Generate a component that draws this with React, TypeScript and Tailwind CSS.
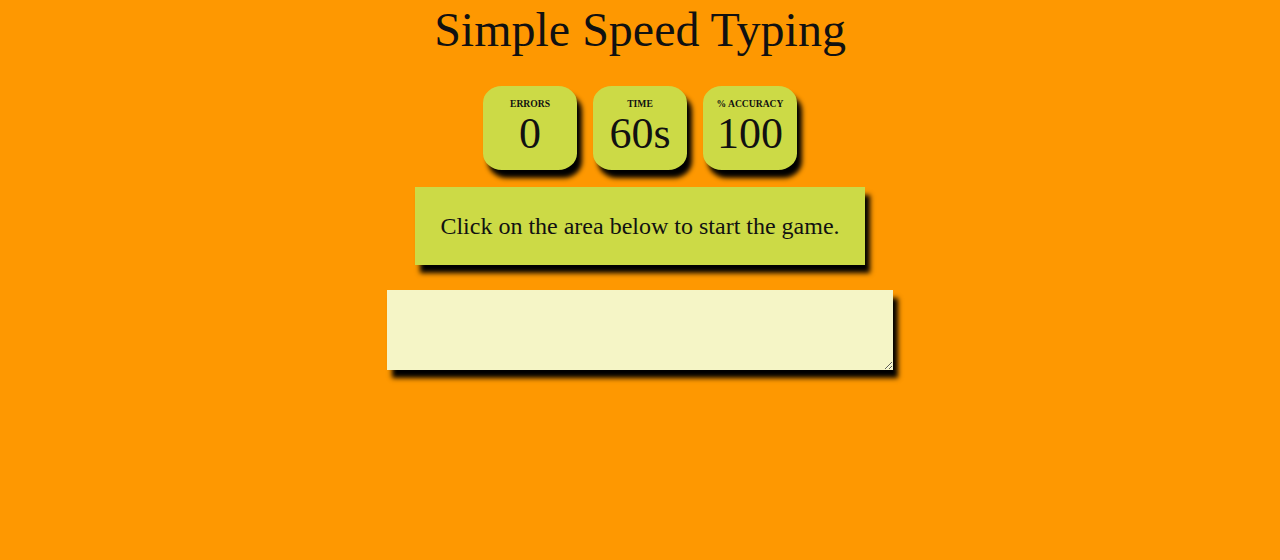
export default function App() {
  const stats = [
    { label: "Errors", value: "0" },
    { label: "Time", value: "60s" },
    { label: "% Accuracy", value: "100" },
  ];

  return (
    <div className="min-h-[560px] bg-[#fe9801] text-[#111] text-center font-['Liberation_Serif',serif]">
      <div className="flex flex-col items-center">
        <h1 className="text-[48px] leading-[55px] font-normal mt-[2px] mb-[21px]">
          Simple Speed Typing
        </h1>
        <div className="flex items-center">
          {stats.map((s) => (
            <div
              key={s.label}
              className="bg-[#ccda46] h-[84px] w-[94px] mx-[8px] mt-[8px] mb-[7px] p-[12px] rounded-[20%] shadow-[5px_8px_5px_black]"
            >
              <div className="uppercase text-[9.6px] font-semibold leading-[11px]">
                {s.label}
              </div>
              <div className="text-[44px] leading-[50px]">{s.value}</div>
            </div>
          ))}
        </div>
        <div className="bg-[#ccda46] text-[24px] leading-[28px] m-[10px] p-[25px] shadow-[5px_8px_5px_black]">
          Click on the area below to start the game.
        </div>
        <textarea
          className="bg-[#f5f5c6] h-[80px] w-[506px] text-[24px] font-semibold m-[15px] p-[20px] border-0 outline-none shadow-[5px_8px_5px_black] font-['Liberation_Serif',serif]"
        />
      </div>
    </div>
  );
}
